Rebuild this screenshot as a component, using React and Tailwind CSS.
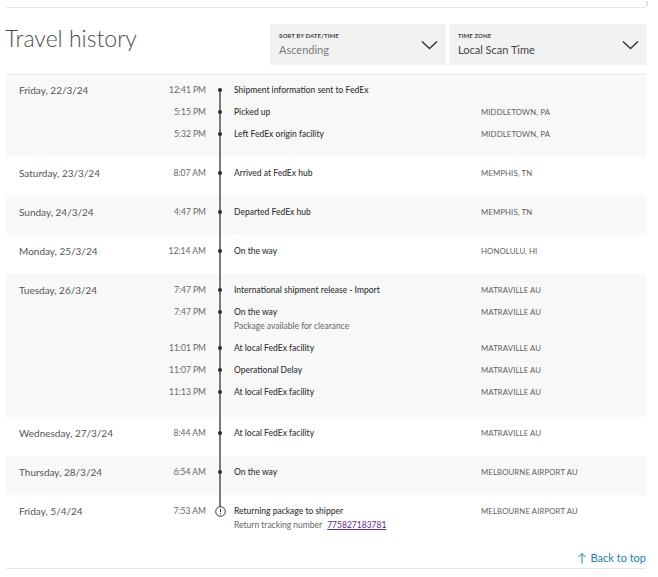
import React from "react";

const groups = [
  {
    date: "Friday, 22/3/24",
    bg: true,
    pt: "pt-[3px]",
    pb: "pb-[12px]",
    rows: [
      { t: "12:41 PM", e: "Shipment information sent to FedEx", l: "" },
      { t: "5:15 PM", e: "Picked up", l: "MIDDLETOWN, PA" },
      { t: "5:32 PM", e: "Left FedEx origin facility", l: "MIDDLETOWN, PA" },
    ],
  },
  { date: "Saturday, 23/3/24", bg: false, rows: [{ t: "8:07 AM", e: "Arrived at FedEx hub", l: "MEMPHIS, TN" }] },
  { date: "Sunday, 24/3/24", bg: true, rows: [{ t: "4:47 PM", e: "Departed FedEx hub", l: "MEMPHIS, TN" }] },
  { date: "Monday, 25/3/24", bg: false, rows: [{ t: "12:14 AM", e: "On the way", l: "HONOLULU, HI" }] },
  {
    date: "Tuesday, 26/3/24",
    bg: true,
    pb: "pb-[14px]",
    rows: [
      { t: "7:47 PM", e: "International shipment release - Import", l: "MATRAVILLE AU" },
      { t: "7:47 PM", e: "On the way", sub: "Package available for clearance", l: "MATRAVILLE AU" },
      { t: "11:01 PM", e: "At local FedEx facility", l: "MATRAVILLE AU" },
      { t: "11:07 PM", e: "Operational Delay", l: "MATRAVILLE AU" },
      { t: "11:13 PM", e: "At local FedEx facility", l: "MATRAVILLE AU" },
    ],
  },
  { date: "Wednesday, 27/3/24", bg: false, rows: [{ t: "8:44 AM", e: "At local FedEx facility", l: "MATRAVILLE AU" }] },
  { date: "Thursday, 28/3/24", bg: true, rows: [{ t: "6:54 AM", e: "On the way", l: "MELBOURNE AIRPORT AU" }] },
  {
    date: "Friday, 5/4/24",
    bg: false,
    rows: [
      { t: "7:53 AM", e: "Returning package to shipper", ret: true, l: "MELBOURNE AIRPORT AU", icon: true },
    ],
  },
];

function Chevron() {
  return (
    <svg width="17" height="10" viewBox="0 0 17 10" fill="none">
      <polyline points="1,1.5 8.5,8.5 16,1.5" stroke="#333" strokeWidth="1.4" />
    </svg>
  );
}

function Dropdown({ label, value, width, valueColor }) {
  return (
    <div className={`${width} h-[41px] bg-[#f2f2f2] flex items-center justify-between pl-[9px] pr-[8px]`}>
      <div className="flex flex-col">
        <span className="text-[6px] font-bold text-[#444] leading-[8px] tracking-[0.1px]">{label}</span>
        <span className={`text-[11px] leading-[15px] mt-[2px] ${valueColor}`}>{value}</span>
      </div>
      <Chevron />
    </div>
  );
}

function Row({ r }) {
  return (
    <div className="grid grid-cols-[56px_28px_247px_1fr] py-[4px] leading-[14px]">
      <div className="text-right text-[8.5px] text-[#666]">{r.t}</div>
      <div className="flex justify-center items-start h-[14px]">
        {r.icon ? (
          <div className="relative z-10 mt-[1.5px]">
            <svg width="11" height="11" viewBox="0 0 11 11">
              <circle cx="5.5" cy="5.5" r="4.8" fill="white" stroke="#333" strokeWidth="1" />
              <line x1="5.5" y1="2.8" x2="5.5" y2="6.3" stroke="#333" strokeWidth="1" />
              <circle cx="5.5" cy="7.9" r="0.6" fill="#333" />
            </svg>
          </div>
        ) : (
          <div className="relative z-10 mt-[5px] w-[4px] h-[4px] rounded-full bg-[#2b2b2b]" />
        )}
      </div>
      <div className="flex flex-col">
        <span className="text-[8.5px] text-[#333] font-medium">{r.e}</span>
        {r.sub && <span className="text-[8.5px] text-[#666]">{r.sub}</span>}
        {r.ret && (
          <span className="text-[8.5px] text-[#666]">
            Return tracking number{" "}
            <span className="ml-[3px] text-[#5a2d91] underline">775827183781</span>
          </span>
        )}
      </div>
      <div className="text-[7.8px] text-[#5e5e5e] tracking-[0.1px]">{r.l}</div>
    </div>
  );
}

export default function App() {
  return (
    <div className="w-[658px] h-[577px] bg-white font-[Lato,sans-serif] overflow-hidden">
      <div className="ml-[6px] w-[640px] pt-[7px]">
        <div className="relative border-t border-[#e6e6e6]">
          <div className="absolute right-[-2px] top-[-7px] w-[2px] h-[5px] bg-[#cfe3ee]" />
        </div>
        <div className="flex items-start justify-between pt-[16px] pb-[9px] border-b border-[#e6e6e6]">
          <h1 className="text-[23px] font-light leading-[28px] text-[#4d4d4d] -ml-[1px]">Travel history</h1>
          <div className="flex gap-[3px] -mr-[1px]">
            <Dropdown label="SORT BY DATE/TIME" value="Ascending" width="w-[176px]" valueColor="text-[#7a7a7a]" />
            <Dropdown label="TIME ZONE" value="Local Scan Time" width="w-[198px]" valueColor="text-[#444]" />
          </div>
        </div>
        <div className="relative mt-[1px]">
          <div className="absolute left-[213px] top-[14px] bottom-[37px] w-[2px] bg-[#7a7a7a]" />
          {groups.map((g, i) => (
            <div
              key={i}
              className={`flex ${g.pt || "pt-[5px]"} ${g.pb || "pb-[12px]"} ${g.bg ? "bg-[#f8f8f8]" : "bg-white"}`}
            >
              <div className="w-[144px] pl-[13px] pt-[4px] leading-[14px] text-[10px] text-[#555]">{g.date}</div>
              <div className="flex-1 flex flex-col">
                {g.rows.map((r, j) => (
                  <Row key={j} r={r} />
                ))}
              </div>
            </div>
          ))}
        </div>
        <div className="flex justify-end items-center mt-[3px] mb-[3px] leading-[14px] text-[11px] text-[#1a7fb5]">
          <svg width="10" height="12" viewBox="0 0 10 12" className="mr-[4px]">
            <line x1="5" y1="1.5" x2="5" y2="11.5" stroke="#1a7fb5" strokeWidth="1" />
            <polyline points="1.5,5 5,1.5 8.5,5" fill="none" stroke="#1a7fb5" strokeWidth="1" />
          </svg>
          <span>Back to top</span>
        </div>
        <div className="border-t border-[#e6e6e6]" />
      </div>
    </div>
  );
}
